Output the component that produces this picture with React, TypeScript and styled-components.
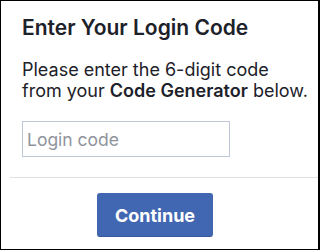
import React from 'react';
import styled, { createGlobalStyle } from 'styled-components';

const GlobalStyle = createGlobalStyle`
  html, body {
    margin: 0;
    padding: 0;
    background: #ffffff;
  }
`;

const Frame = styled.div`
  width: 320px;
  height: 250px;
  box-sizing: border-box;
  border: 1px solid #000000;
  border-right-width: 2px;
  background: #ffffff;
  display: flex;
  flex-direction: column;
  font-family: Inter, 'Liberation Sans', Arial, sans-serif;
  color: #1d2129;
  overflow: hidden;
`;

const Content = styled.div`
  padding: 15px 0 0 21px;
  display: flex;
  flex-direction: column;
`;

const Title = styled.h2`
  margin: 0;
  font-size: 21px;
  line-height: 24px;
  font-weight: 600;
  color: #1d2129;
`;

const Text = styled.p`
  margin: 19px 0 0;
  font-size: 18px;
  line-height: 21px;
  color: #1d2129;
  white-space: nowrap;

  b {
    font-weight: 600;
  }
`;

const CodeInput = styled.input`
  margin-top: 20px;
  width: 208px;
  height: 36px;
  box-sizing: border-box;
  border: 1px solid #bdc7d8;
  border-radius: 0;
  padding: 0 4px;
  font-family: Inter, 'Liberation Sans', Arial, sans-serif;
  font-size: 17.5px;
  color: #1d2129;
  outline: none;

  &::placeholder {
    color: #90949c;
  }
`;

const Divider = styled.div`
  margin: 20px 0 0 9px;
  height: 1px;
  background: #dddfe2;
`;

const Footer = styled.div`
  display: flex;
  padding: 15px 0 0 96px;
`;

const Button = styled.button`
  width: 116px;
  height: 44px;
  box-sizing: border-box;
  border: 1px solid #4267b2;
  border-bottom-color: #365899;
  border-radius: 3px;
  background: #4267b2;
  color: #ffffff;
  font-family: Inter, 'Liberation Sans', Arial, sans-serif;
  font-size: 18px;
  font-weight: 700;
  cursor: pointer;
`;

export default function App() {
  return (
    <>
      <GlobalStyle />
      <Frame>
        <Content>
          <Title>Enter Your Login Code</Title>
          <Text>
            Please enter the 6-digit code
            <br />
            from your <b>Code Generator</b> below.
          </Text>
          <CodeInput placeholder="Login code" />
        </Content>
        <Divider />
        <Footer>
          <Button>Continue</Button>
        </Footer>
      </Frame>
    </>
  );
}
